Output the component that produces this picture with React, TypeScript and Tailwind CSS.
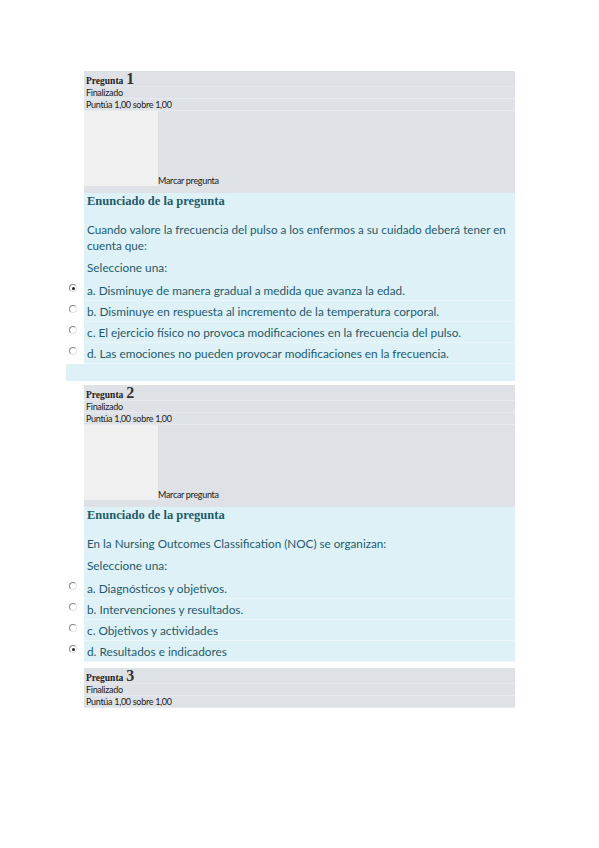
import React from 'react';

type Option = { label: string; checked?: boolean };

type Question = {
  number: number;
  text: string[];
  options: Option[];
  padBottom?: boolean;
};

const questions: Question[] = [
  {
    number: 1,
    text: [
      'Cuando valore la frecuencia del pulso a los enfermos a su cuidado deberá tener en',
      'cuenta que:',
    ],
    options: [
      { label: 'a. Disminuye de manera gradual a medida que avanza la edad.', checked: true },
      { label: 'b. Disminuye en respuesta al incremento de la temperatura corporal.' },
      { label: 'c. El ejercicio físico no provoca modificaciones en la frecuencia del pulso.' },
      { label: 'd. Las emociones no pueden provocar modificaciones  en la frecuencia.' },
    ],
    padBottom: true,
  },
  {
    number: 2,
    text: ['En la Nursing Outcomes Classification (NOC) se organizan:'],
    options: [
      { label: 'a. Diagnósticos y objetivos.' },
      { label: 'b. Intervenciones y resultados.' },
      { label: 'c. Objetivos y actividades' },
      { label: 'd. Resultados e indicadores', checked: true },
    ],
  },
];

const sans = { fontFamily: 'Lato, "Open Sans", sans-serif' };
const serif = { fontFamily: '"Liberation Serif", "DejaVu Serif", serif' };

const Radio: React.FC<{ checked?: boolean }> = ({ checked }) => (
  <span className="absolute left-[4px] top-[4px] flex h-[8px] w-[8px] items-center justify-center rounded-full border border-[#8a8a8a] border-b-[#e2e2e2] border-r-[#e2e2e2] bg-white">
    {checked && <span className="h-[3px] w-[3px] rounded-full bg-[#222]" />}
  </span>
);

const Info: React.FC<{ number: number; withFlag?: boolean }> = ({ number, withFlag = true }) => (
  <div className="bg-[#dee1e5] text-[#222]">
    <div className="flex h-[16px] items-end border-b border-dotted border-[#eceef0] pl-[2px] leading-none">
      <span className="text-[9.5px] font-bold" style={serif}>Pregunta</span>
      <span className="ml-[3px] text-[16px] font-bold leading-[14px] text-[#333]" style={serif}>{number}</span>
    </div>
    <div className="h-[12px] border-b border-[#e8eaed] pl-[2px] text-[9px] leading-[12px] tracking-[-0.3px]" style={sans}>
      Finalizado
    </div>
    <div className="h-[12px] border-b border-[#e8eaed] pl-[2px] text-[9px] leading-[12px] tracking-[-0.3px]" style={sans}>
      Puntúa 1,00 sobre 1,00
    </div>
    {withFlag && (
      <div className="flex h-[82px] items-start">
        <div className="h-[75px] w-[74px] bg-[#f0f0f0]" />
        <span className="mt-[64px] text-[9px] leading-[12px] tracking-[-0.3px]" style={sans}>
          Marcar pregunta
        </span>
      </div>
    )}
  </div>
);

const Body: React.FC<{ q: Question }> = ({ q }) => (
  <div className="text-[#1f5b6b]" style={sans}>
    <div className="bg-[#def1f7] pl-[3px]">
      <div className="text-[12.5px] font-bold leading-[16px]" style={serif}>
        Enunciado de la pregunta
      </div>
      <div className="mt-[12px] whitespace-nowrap text-[11.7px] leading-[16px]">
        {q.text.map((t) => (
          <div key={t}>{t}</div>
        ))}
      </div>
      <div className="mt-[7px] pb-[4px] text-[11.8px] leading-[16px]">Seleccione una:</div>
    </div>
    <div className="-ml-[19px]">
      {q.options.map((o) => (
        <div key={o.label} className="flex h-[21px]">
          <div className="relative h-[19px] w-[19px] bg-white">
            <Radio checked={o.checked} />
          </div>
          <div className="flex-1 whitespace-nowrap border-b border-[#eaf6fa] bg-[#def1f7] pl-[3px] pt-[3px] text-[11.8px] leading-[16px]">
            {o.label}
          </div>
        </div>
      ))}
      {q.padBottom && <div className="ml-[1px] h-[17px] bg-[#def1f7]" />}
    </div>
  </div>
);

const App: React.FC = () => {
  return (
    <div className="min-h-screen bg-white pt-[71px]">
      <div className="ml-[84px] flex w-[431px] flex-col">
        <Info number={1} />
        <Body q={questions[0]} />
        <div className="h-[4px]" />
        <Info number={2} />
        <Body q={questions[1]} />
        <div className="h-[6px]" />
        <div className="pb-[2px]">
          <Info number={3} withFlag={false} />
        </div>
      </div>
    </div>
  );
};

export default App;
